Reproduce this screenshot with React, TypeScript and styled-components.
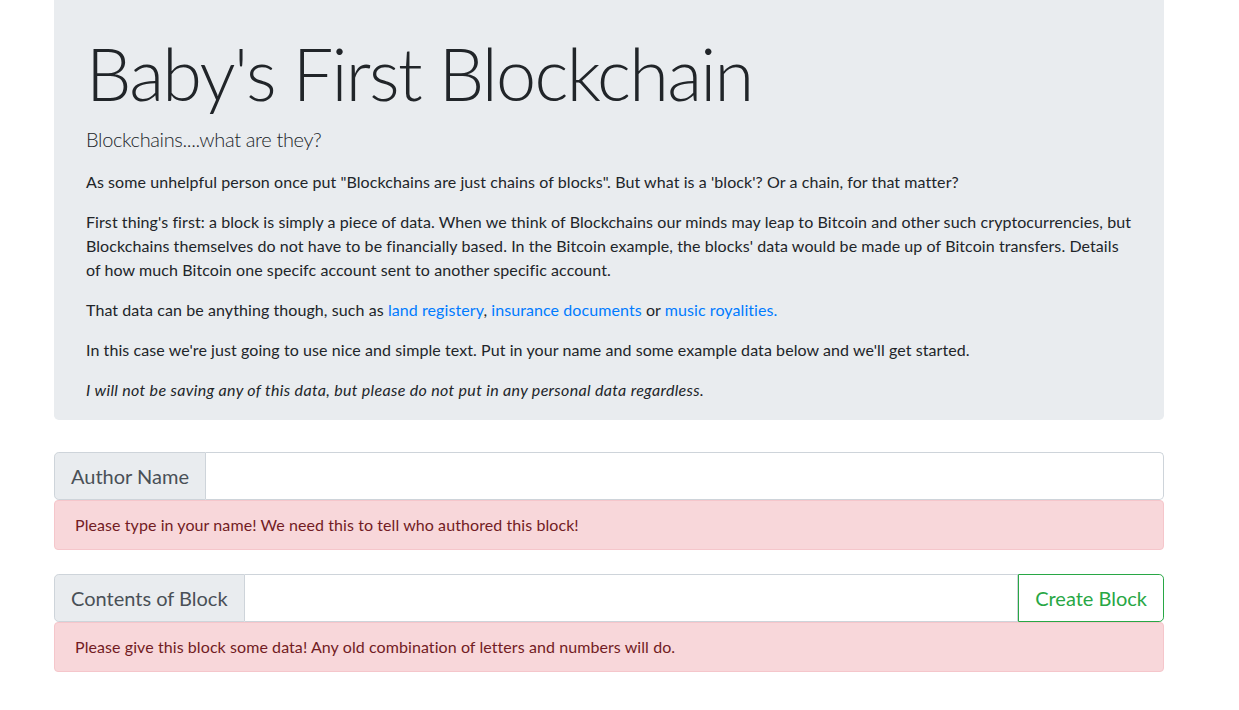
import styled, { createGlobalStyle } from "styled-components";

const GlobalStyle = createGlobalStyle`
  *, *::before, *::after { box-sizing: border-box; }
  body {
    margin: 0;
    background: #fff;
    color: #212529;
    font-family: "Lato", "Liberation Sans", sans-serif;
    font-size: 16px;
    line-height: 1.5;
  }
`;

const Page = styled.div`
  width: 1110px;
  margin-left: 54px;
`;

const Jumbotron = styled.section`
  background: #e9ecef;
  border-radius: 0 0 4.8px 4.8px;
  padding: 30px 32px 2px;
  margin-bottom: 32px;
`;

const Title = styled.h1`
  margin: 0 0 8px;
  font-size: 72px;
  font-weight: 300;
  line-height: 1.2;
  letter-spacing: -1.7px;
`;

const Lead = styled.p`
  margin: 0 0 16px;
  font-size: 20px;
  font-weight: 300;
  line-height: 1.5;
  letter-spacing: -0.35px;
`;

const Para = styled.p<{ $italic?: boolean }>`
  margin: 0 0 16px;
  font-style: ${({ $italic }) => ($italic ? "italic" : "normal")};
  letter-spacing: ${({ $italic }) => ($italic ? "0.32px" : "0.08px")};
`;

const Link = styled.a`
  color: #007bff;
  text-decoration: none;
`;

const Field = styled.div`
  margin-bottom: 24px;
`;

const InputGroup = styled.div`
  display: flex;
  height: 48px;
`;

const Addon = styled.span`
  display: flex;
  align-items: center;
  padding: 0 16px;
  background: #e9ecef;
  border: 1px solid #ced4da;
  border-radius: 4.8px 0 0 4.8px;
  color: #495057;
  font-size: 20px;
  white-space: nowrap;
`;

const Input = styled.input<{ $last?: boolean }>`
  flex: 1;
  min-width: 0;
  border: 1px solid #ced4da;
  border-left: none;
  border-radius: ${({ $last }) => ($last ? "0 4.8px 4.8px 0" : "0")};
  padding: 8px 16px;
  font: inherit;
  font-size: 20px;
  color: #495057;
  outline: none;
`;

const OutlineButton = styled.button`
  padding: 0 16px;
  border: 1px solid #28a745;
  border-radius: 0 4.8px 4.8px 0;
  background: transparent;
  color: #28a745;
  font-family: inherit;
  font-size: 20px;
  cursor: pointer;
`;

const Alert = styled.div`
  padding: 12px 20px;
  background: #f8d7da;
  border: 1px solid #f5c6cb;
  border-radius: 4px;
  color: #721c24;
  letter-spacing: 0.08px;
`;

export default function App() {
  return (
    <>
      <GlobalStyle />
      <Page>
        <Jumbotron>
          <Title>Baby's First Blockchain</Title>
          <Lead>Blockchains....what are they?</Lead>
          <Para>
            As some unhelpful person once put "Blockchains are just chains of blocks". But what is a
            'block'? Or a chain, for that matter?
          </Para>
          <Para>
            First thing's first: a block is simply a piece of data. When we think of Blockchains our
            minds may leap to Bitcoin and other such cryptocurrencies, but Blockchains themselves do
            not have to be financially based. In the Bitcoin example, the blocks' data would be made
            up of Bitcoin transfers. Details of how much Bitcoin one specifc account sent to another
            specific account.
          </Para>
          <Para>
            That data can be anything though, such as <Link href="#">land registery</Link>,{" "}
            <Link href="#">insurance documents</Link> or <Link href="#">music royalities.</Link>
          </Para>
          <Para>
            In this case we're just going to use nice and simple text. Put in your name and some
            example data below and we'll get started.
          </Para>
          <Para $italic>
            I will not be saving any of this data, but please do not put in any personal data
            regardless.
          </Para>
        </Jumbotron>

        <Field>
          <InputGroup>
            <Addon>Author Name</Addon>
            <Input type="text" $last />
          </InputGroup>
          <Alert>Please type in your name! We need this to tell who authored this block!</Alert>
        </Field>

        <Field>
          <InputGroup>
            <Addon>Contents of Block</Addon>
            <Input type="text" />
            <OutlineButton>Create Block</OutlineButton>
          </InputGroup>
          <Alert>Please give this block some data! Any old combination of letters and numbers will do.</Alert>
        </Field>
      </Page>
    </>
  );
}
